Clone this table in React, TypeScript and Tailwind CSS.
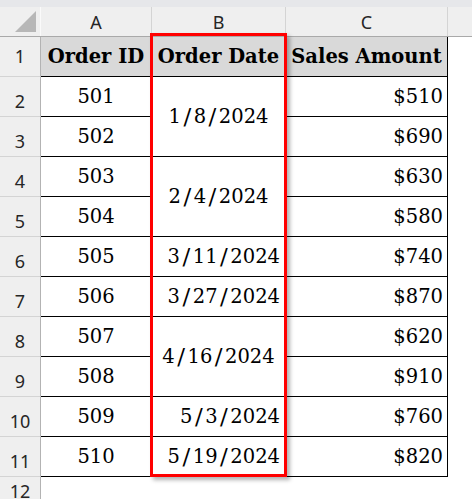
import React from 'react';

type Row = { id: string; date?: string; span?: number; amount: string };

const rows: Row[] = [
  { id: '501', date: '1/8/2024', span: 2, amount: '$510' },
  { id: '502', amount: '$690' },
  { id: '503', date: '2/4/2024', span: 2, amount: '$630' },
  { id: '504', amount: '$580' },
  { id: '505', date: '3/11/2024', amount: '$740' },
  { id: '506', date: '3/27/2024', amount: '$870' },
  { id: '507', date: '4/16/2024', span: 2, amount: '$620' },
  { id: '508', amount: '$910' },
  { id: '509', date: '5/3/2024', amount: '$760' },
  { id: '510', date: '5/19/2024', amount: '$820' },
];

// Cambria-like wide slashes
const DateText = ({ value }: { value: string }) => {
  const parts = value.split('/');
  return (
    <span>
      {parts.map((p, i) => (
        <React.Fragment key={i}>
          {i > 0 && <span className="mx-[2.5px] text-[23px] leading-[0] relative top-[1px]">/</span>}
          {p}
        </React.Fragment>
      ))}
    </span>
  );
};

const RowHead = ({ n, first }: { n: number; first?: boolean }) => (
  <div
    className={`flex justify-center bg-[#efefef] border-r border-b border-r-[#b3b3b3] border-b-[#d4d4d4] font-['Noto_Sans',sans-serif] text-[18px] leading-[18px] text-[#262626] ${
      first ? 'items-end pb-[11px]' : 'items-end pb-[6px]'
    }`}
  >
    {n}
  </div>
);

const cell = 'flex items-center border-r border-b border-black text-black';

export default function App() {
  return (
    <div className="relative w-[472px] h-[499px] overflow-hidden bg-white font-['DejaVu_Serif',serif] text-[19.5px] leading-[24px]">
      <div className="h-[7px] bg-[#e6e7ea]" />

      <div className="flex h-[30px] bg-[#efefef] border-b border-[#a9a9a9] font-['Noto_Sans',sans-serif] text-[18px] leading-[18px] text-[#262626]">
        <div className="w-[41px] border-r border-[#fafafa]">
          <svg width="40" height="29" viewBox="0 0 40 29">
            <polygon points="36,4 36,25 15,25" fill="#b7b7b7" />
          </svg>
        </div>
        <div className="w-[111px] flex items-end justify-center pb-[5px] border-r border-[#d4d4d4]">A</div>
        <div className="w-[134px] flex items-end justify-center pb-[5px] border-r border-[#d4d4d4]">B</div>
        <div className="w-[162px] flex items-end justify-center pb-[5px] border-r border-[#d4d4d4]">C</div>
        <div className="flex-1" />
      </div>

      <div className="grid grid-cols-[41px_111px_134px_162px_1fr] auto-rows-[40px]">
        <RowHead n={1} first />
        <div className={`${cell} justify-center bg-[#d9d9d9] font-bold`}>Order ID</div>
        <div className={`${cell} justify-center bg-[#d9d9d9] font-bold`}>Order Date</div>
        <div className={`${cell} justify-center bg-[#d9d9d9] font-bold`}>Sales Amount</div>
        <div />

        {rows.map((r, i) => (
          <React.Fragment key={r.id}>
            <RowHead n={i + 2} />
            <div className={`${cell} justify-center`}>{r.id}</div>
            {r.date &&
              (r.span ? (
                <div className={`${cell} row-span-2 justify-center`}>
                  <DateText value={r.date} />
                </div>
              ) : (
                <div className={`${cell} justify-end pr-[5px]`}>
                  <DateText value={r.date} />
                </div>
              ))}
            <div className={`${cell} justify-end pr-[4px]`}>{r.amount}</div>
            <div />
          </React.Fragment>
        ))}

        <div className="flex justify-center items-start pt-[5px] bg-[#efefef] border-r border-[#b3b3b3] font-['Noto_Sans',sans-serif] text-[18px] leading-[18px] text-[#262626]">
          12
        </div>
      </div>

      {/* highlight box around column B */}
      <div className="absolute left-[150px] top-[33px] w-[137px] h-[444px] border-[3px] border-[#ff0000] shadow-[3px_3px_4px_rgba(0,0,0,0.3)]" />
    </div>
  );
}
